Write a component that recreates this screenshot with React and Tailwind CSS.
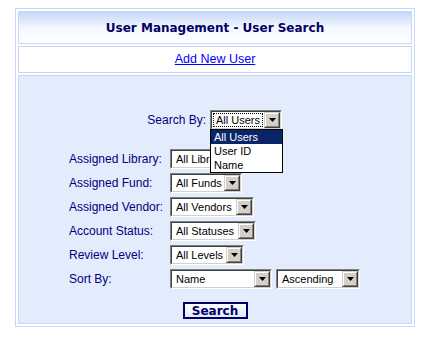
import React from "react";

function Arrow() {
  return (
    <div className="flex h-[16px] w-[16px] shrink-0 border border-t-[#d4d0c8] border-l-[#d4d0c8] border-b-[#404040] border-r-[#404040]">
      <div className="flex flex-1 items-center justify-center border border-t-white border-l-white border-b-[#808080] border-r-[#808080] bg-[#d4d0c8]">
        <svg width="7" height="4" viewBox="0 0 7 4">
          <path d="M0 0h7L3.5 4z" fill="#000" />
        </svg>
      </div>
    </div>
  );
}

function Select({ value, width, focused }) {
  return (
    <div
      className="flex h-[20px] shrink-0 border border-t-[#808080] border-l-[#808080] border-b-white border-r-white"
      style={{ width }}
    >
      <div className="flex min-w-0 flex-1 items-center border border-t-[#404040] border-l-[#404040] border-b-[#d4d0c8] border-r-[#d4d0c8] bg-white">
        <div className="flex h-full min-w-0 flex-1 items-center p-[1px]">
          <div
            className={
              "flex h-full min-w-0 flex-1 items-center overflow-hidden whitespace-nowrap pl-[2px] text-[11px] leading-none text-black " +
              (focused ? "border border-dotted border-black" : "border border-transparent")
            }
          >
            {value}
          </div>
        </div>
        <Arrow />
      </div>
    </div>
  );
}

function Row({ label, children }) {
  return (
    <div className="flex h-[20px] items-center">
      <div className="w-[101px] whitespace-nowrap text-[12px] text-[#000080]">{label}</div>
      {children}
    </div>
  );
}

export default function App() {
  return (
    <div
      className="bg-white pl-[15px] pt-[8px]"
      style={{ fontFamily: '"Liberation Sans", Arial, sans-serif' }}
    >
      <div className="flex h-[319px] w-[400px] flex-col gap-[2px] border border-[#c5d8f7] p-[2px]">
        <div className="flex h-[33px] shrink-0 items-center justify-center border border-[#c5d8f7] bg-gradient-to-b from-[#c4d7f8] via-[#f3f7fe] to-white pt-[1px]">
          <span
            className="text-[12px] font-bold text-[#000066]"
            style={{ fontFamily: '"DejaVu Sans", Verdana, sans-serif' }}
          >
            User Management - User Search
          </span>
        </div>
        <div className="flex h-[27px] shrink-0 items-center justify-center border border-[#c5d8f7] bg-white">
          <a href="#" className="text-[12.5px] text-[#0000ff] underline">
            Add New User
          </a>
        </div>
        <div className="flex flex-1 flex-col border border-[#c5d8f7] bg-[#e3ecfc] pl-[50px] pt-[34px]">
          <div className="relative flex h-[20px] items-center">
            <div className="w-[141px] pr-[4px] text-right text-[12px] text-[#000080]">
              Search By:
            </div>
            <div className="relative">
              <Select value="All Users" width={72} focused />
              <div className="absolute left-0 top-[19px] z-10 w-[73px] border border-black bg-white text-[11px] leading-[14px] text-black">
                <div className="bg-[#0a246a] pl-[3px] text-white">All Users</div>
                <div className="pl-[3px]">User ID</div>
                <div className="pl-[3px]">Name</div>
              </div>
            </div>
          </div>
          <div className="mt-[19px] flex flex-col gap-[4px]">
            <Row label="Assigned Library:">
              <Select value="All Libraries" width={92} />
            </Row>
            <Row label="Assigned Fund:">
              <Select value="All Funds" width={72} />
            </Row>
            <Row label="Assigned Vendor:">
              <Select value="All Vendors" width={84} />
            </Row>
            <Row label="Account Status:">
              <Select value="All Statuses" width={86} />
            </Row>
            <Row label="Review Level:">
              <Select value="All Levels" width={74} />
            </Row>
            <Row label="Sort By:">
              <div className="flex gap-[4px]">
                <Select value="Name" width={102} />
                <Select value="Ascending" width={84} />
              </div>
            </Row>
          </div>
          <div className="mt-[13px] flex justify-center pr-[50px]">
            <button
              className="flex h-[17px] w-[65px] items-center justify-center border-2 border-[#000066] bg-gradient-to-b from-white to-[#dfe8fb] text-[12px] font-bold text-[#000066]"
              style={{ fontFamily: '"DejaVu Sans", Verdana, sans-serif' }}
            >
              Search
            </button>
          </div>
        </div>
      </div>
    </div>
  );
}
